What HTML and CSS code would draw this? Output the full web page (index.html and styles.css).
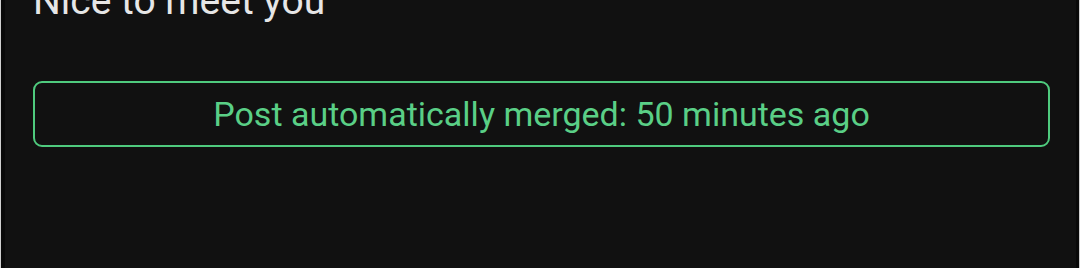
FILE: index.html
```html
<!DOCTYPE html>
<html>
<head>
<meta charset="utf-8">
<link rel="stylesheet" href="styles.css">
</head>
<body>
<div class="frame">
  <div class="panel">
    <p class="message">Nice to meet you</p>
    <div class="merged">Post automatically merged: 50 minutes ago</div>
  </div>
</div>
</body>
</html>
```
FILE: styles.css
```css
html, body {
  margin: 0;
  padding: 0;
  background: #111111;
}
body {
  font-family: Roboto, "Noto Sans", sans-serif;
  width: 1080px;
  height: 268px;
  overflow: hidden;
}
.frame {
  height: 268px;
  border-left: 1px solid #d0d0d0;
  border-right: 1px solid #d0d0d0;
  box-sizing: border-box;
}
.panel {
  height: 100%;
  box-sizing: border-box;
  border-left: 4px solid #090909;
  border-right: 3px solid #090909;
  background: #111111;
  padding: 0 26px 0 28px;
  display: flex;
  flex-direction: column;
}
.message {
  margin: -22px 0 0 0;
  color: #e6e6e6;
  font-size: 39px;
  line-height: 46px;
}
.merged {
  margin-top: 57px;
  height: 66px;
  flex: none;
  box-sizing: border-box;
  border: 2px solid #4fcb7e;
  border-radius: 9px;
  color: #5acf86;
  font-size: 34px;
  display: flex;
  align-items: center;
  justify-content: center;
}
```
